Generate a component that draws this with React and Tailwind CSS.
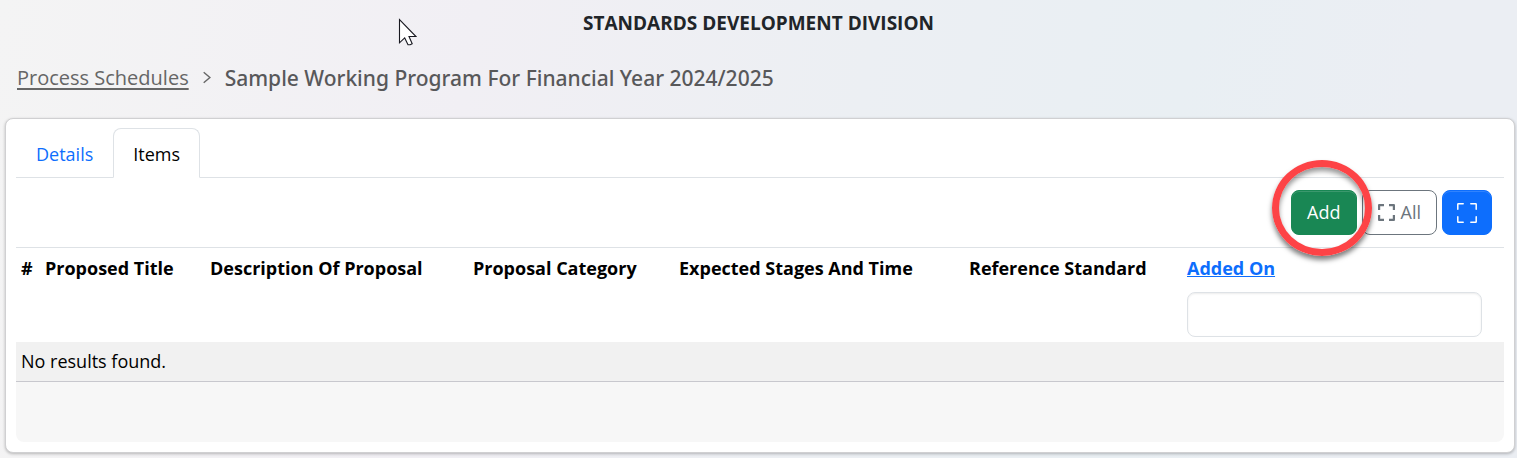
import React from "react";

const columns = [
  { title: "#", width: "w-[24px]" },
  { title: "Proposed Title", width: "w-[165px]" },
  { title: "Description Of Proposal", width: "w-[263px]" },
  { title: "Proposal Category", width: "w-[206px]" },
  { title: "Expected Stages And Time", width: "w-[290px]" },
  { title: "Reference Standard", width: "w-[218px]" },
  { title: "Added On", width: "w-[322px]", sortable: true },
];

// thin corner brackets
function FullscreenIcon() {
  return (
    <svg
      viewBox="0 0 20 20"
      fill="none"
      stroke="currentColor"
      strokeWidth="1.5"
      strokeLinecap="round"
      strokeLinejoin="round"
      className="h-5 w-5"
      aria-hidden="true"
    >
      <path d="M.8 6.2V1.3q0-.5.5-.5h4.9M13.8.8h4.9q.5 0 .5.5v4.9M19.2 13.8v4.9q0 .5-.5.5h-4.9M6.2 19.2H1.3q-.5 0-.5-.5v-4.9" />
    </svg>
  );
}

// heavier corner brackets, used next to a label
function ExpandIcon() {
  return (
    <svg
      viewBox="0 0 17 17"
      fill="none"
      stroke="currentColor"
      strokeWidth="2.2"
      strokeLinejoin="round"
      className="h-[17px] w-[17px]"
      aria-hidden="true"
    >
      <path d="M1.1 6V1.1H6M11 1.1h4.9V6M15.9 11v4.9H11M6 15.9H1.1V11" />
    </svg>
  );
}

function ChevronIcon() {
  return (
    <svg viewBox="0 0 8 14" fill="none" stroke="#666" strokeWidth="1.4" className="h-[14px] w-2" aria-hidden="true">
      <path d="M.7 1.2 6.9 6.5.7 11.8" />
    </svg>
  );
}

function Cursor() {
  return (
    <svg viewBox="0 0 19 28" className="pointer-events-none absolute top-[18px] left-[398px] h-7 w-[19px]" aria-hidden="true">
      <path d="M1.5 1.5v23.3l5.2-4.9 3.3 6.9h2.2l2-1-3.2-7.3h7z" fill="#fff" stroke="#181820" strokeWidth="1.1" />
    </svg>
  );
}

function Header() {
  return (
    <header className="relative pt-2">
      <h1 className="text-center text-[19px] leading-[30px] font-bold text-[#212529]">
        STANDARDS DEVELOPMENT DIVISION
      </h1>
      <nav aria-label="Breadcrumb" className="mt-6 flex items-center px-[17px] text-[20px] leading-[32px] text-[#58585a]">
        <a href="#schedules" className="text-[#666] underline decoration-2 underline-offset-3">
          Process Schedules
        </a>
        <span className="mx-[14px]">
          <ChevronIcon />
        </span>
        <span className="font-['Noto_Sans','Open_Sans',sans-serif] text-[21px] font-medium">
          Sample Working Program For Financial Year 2024/2025
        </span>
      </nav>
      <Cursor />
    </header>
  );
}

function Tabs() {
  return (
    <div role="tablist" className="flex border-b border-[#dee2e6] text-[18px] leading-[30px]">
      <a href="#details" role="tab" aria-selected="false" className="px-5 pt-[11px] pb-2 text-[#0d6efd]">
        Details
      </a>
      <a
        href="#items"
        role="tab"
        aria-selected="true"
        className="-mb-px rounded-t-lg border border-b-white border-[#dee2e6] bg-white px-[19px] pt-[10px] pb-2 text-black"
      >
        Items
      </a>
    </div>
  );
}

function Toolbar() {
  return (
    <div className="flex justify-end gap-[5px] px-3 pt-3 pb-3 text-[18px]">
      <div className="relative">
        <button
          type="button"
          className="h-[45px] rounded-lg border border-[#198754] bg-[#198754] px-[15px] text-white shadow-[inset_0_1px_0_rgba(255,255,255,0.15)]"
        >
          Add
        </button>
        {/* highlight ring */}
        <span className="pointer-events-none absolute -top-[30px] -left-[19px] z-10 h-[96px] w-[100px] rounded-[50%] border-[7px] border-[#fd4346] shadow-[0_4px_5px_rgba(0,0,0,0.5),inset_0_4px_5px_rgba(0,0,0,0.4)]" />
      </div>
      <button
        type="button"
        className="flex h-[45px] items-center gap-[6px] rounded-lg border border-[#6c757d] px-[15px] text-[#6c757d]"
      >
        <ExpandIcon />
        All
      </button>
      <button
        type="button"
        aria-label="Fullscreen"
        className="flex h-[45px] w-[50px] items-center justify-center rounded-lg border border-[#0d6efd] bg-[#0d6efd] text-white shadow-[inset_0_1px_0_rgba(255,255,255,0.15)]"
      >
        <FullscreenIcon />
      </button>
    </div>
  );
}

function ItemsTable() {
  return (
    <table className="w-full table-fixed border-t border-[#dee2e6] text-left text-[18px] leading-[30px] text-black">
      <colgroup>
        {columns.map((col) => (
          <col key={col.title} className={col.width} />
        ))}
      </colgroup>
      <thead>
        <tr>
          {columns.map((col) => (
            <th key={col.title} scope="col" className="px-[5px] pt-[5px] pb-[9px] font-bold whitespace-nowrap">
              {col.sortable ? (
                <a href="#sort" className="text-[#0d6efd] underline">
                  {col.title}
                </a>
              ) : (
                col.title
              )}
            </th>
          ))}
        </tr>
        <tr>
          <td colSpan={6} />
          <td className="pr-[22px] pb-[5px] pl-[5px]">
            <input
              type="text"
              aria-label="Added On"
              className="block h-[45px] w-full rounded-lg border border-[#dee2e6] bg-white px-4 shadow-[inset_0_1px_2px_rgba(0,0,0,0.075)]"
            />
          </td>
        </tr>
      </thead>
      <tbody>
        <tr className="border-b border-[#c8c8ce] bg-[#f1f1f1]">
          <td colSpan={7} className="px-[5px] pt-[4px] pb-[5px]">
            No results found.
          </td>
        </tr>
      </tbody>
    </table>
  );
}

export default function App() {
  return (
    <div className="min-h-screen bg-[linear-gradient(100deg,#f4f4f4_0%,#f1eff4_30%,#eceff3_55%,#e9eff3_75%,#ebeef3_90%)] font-['Open_Sans',sans-serif]">
      <Header />
      <main className="mt-6 mr-[2px] ml-[5px] rounded-lg border border-[#d0d0d2] bg-white p-[10px] pt-[9px] shadow-[0_1px_3px_rgba(0,0,0,0.25)]">
        <Tabs />
        <Toolbar />
        <ItemsTable />
        <div className="h-[60px] rounded-b-lg bg-[#f7f7f7]" />
      </main>
    </div>
  );
}
